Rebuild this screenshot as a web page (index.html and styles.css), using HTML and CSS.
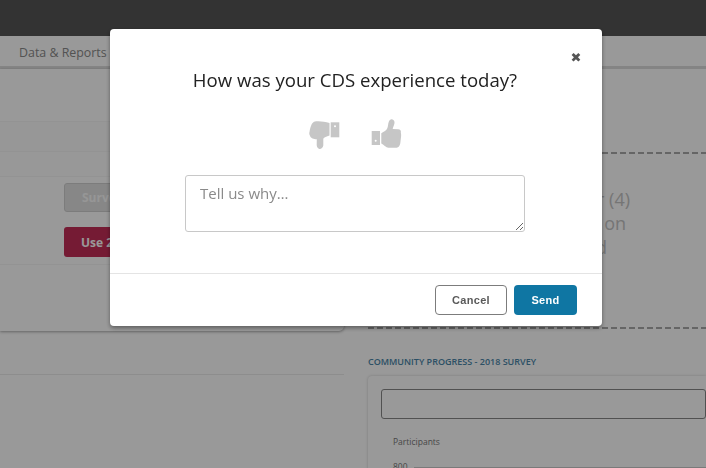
FILE: index.html
```html
<!DOCTYPE html>
<html lang="en">
<head>
<meta charset="utf-8">
<title>CDS feedback</title>
<link rel="stylesheet" href="styles.css">
</head>
<body>
<div class="page">
  <header class="topbar"></header>
  <nav class="nav"><span class="nav-item">Data &amp; Reports</span></nav>
  <main class="content">
    <section class="left">
      <div class="card">
        <div class="row row-a"></div>
        <div class="row row-b"></div>
        <div class="row row-e"></div>
        <div class="row row-c">
          <button class="btn btn-grey">Survey</button>
          <button class="btn btn-red">Use 2018</button>
        </div>
        <div class="row row-d"></div>
      </div>
      <div class="left-gap"></div>
      <div class="card-low"></div>
    </section>
    <section class="right">
      <div class="dashed">
        <p class="note"><span class="l1">Community Partner (4)</span><span class="l2">Reports based on</span><span class="l3">data collected</span></p>
      </div>
      <h2 class="section-title">COMMUNITY PROGRESS - 2018 SURVEY</h2>
      <div class="chart-card">
        <div class="select"></div>
        <div class="axis-title">Participants</div>
        <div class="tick"><span>800</span><i class="tick-line"></i></div>
      </div>
    </section>
  </main>
</div>
<div class="overlay">
  <div class="modal">
    <div class="modal-body">
      <button class="close" aria-label="Close">&#10006;</button>
      <h1 class="title">How was your CDS experience today?</h1>
      <div class="thumbs">
        <svg class="thumb" width="32" height="31" viewBox="0 0 32 31">
          <path d="M21.7 3.3h8.6v15h-8.6z"/>
          <circle class="dot" cx="26" cy="7.3" r="1"/>
          <path d="M5 2.7C9 1.6 15 2.4 20.5 4V16.6C17.500 17.500 15 18.300 14.300 19.800L14.300 26.500C13.800 29 11.800 30.500 10.300 30C8.500 29.500 7.600 27.500 7.700 25.500L7.800 20.300C4.800 20 1.800 19.500 1.200 17.300C0.300 15.500 0 14.500 0.600 12.500C1.300 8.500 2.500 4 5 2.700Z"/>
        </svg>
        <svg class="thumb" width="31" height="30" viewBox="0 0 31 30">
          <path d="M.7 12H9v14H.7z"/>
          <circle class="dot" cx="4.700" cy="21.700" r="1"/>
          <path d="M10.300 24.500V14.300C13 12.500 15.500 11.500 16.300 9.300C17.200 7.200 17 4.500 17.800 2.700C18.500 0.800 20 -.2 21.500 .5C23.500 1.300 23.800 3 23.300 5C22.900 6.800 22 8.500 21.700 10L27.300 10.300C29.300 10.500 30.300 11.800 29.800 13.500C30.500 16 30 18 29.300 24.300C28.800 27 27.500 28.700 25.700 28.700H17.500C15 28.700 12.500 25.300 10.300 24.500Z"/>
        </svg>
      </div>
      <textarea class="why" placeholder="Tell us why…"></textarea>
    </div>
    <div class="modal-foot">
      <button class="action action-cancel">Cancel</button>
      <button class="action action-send">Send</button>
    </div>
  </div>
</div>
</body>
</html>
```
FILE: styles.css
```css
* { box-sizing: border-box; }
html, body { margin: 0; height: 100%; overflow: hidden; }
body { font-family: "Open Sans", sans-serif; background: #fff; color: #8e8e8e; }

.page { width: 706px; height: 468px; overflow: hidden; }
.topbar { height: 36px; background: #555; }
.nav { height: 33px; background: #fff; border-bottom: 3px solid #dcdcdc; padding: 8px 0 0 19px; font-size: 12.400px; line-height: 18px; }
.nav-item { color: #8a8a8a; }

.content { display: grid; grid-template-columns: 344px 338px; column-gap: 24px; }

.left { display: flex; flex-direction: column; }
.card { height: 262px; background: #fff; border-radius: 0 0 5px 0; box-shadow: 0 1px 3px rgba(0,0,0,.35); display: flex; flex-direction: column; }
.row { border-bottom: 1px solid #f6f6f6; }
.row-a { height: 53px; }
.row-b { height: 30px; background: #fcfcfc; }
.row-e { height: 25px; background: #fdfdfd; }
.row-c { height: 88px; display: flex; flex-direction: column; gap: 15px; padding: 6px 0 0 64px; }
.row-d { flex: 1; border: 0; }
.btn { width: 130px; border-radius: 3px; font: 700 12px "Open Sans", sans-serif; text-align: left; padding: 0 0 0 17px; }
.btn-grey { height: 29px; background: #e2e2e2; border: 1px solid #cfcfcf; color: #fafafa; }
.btn-red { height: 30px; background: #c42e58; border: 0; color: #fff; }
.left-gap { height: 44px; border-bottom: 1px solid #ececec; }
.card-low { height: 100px; background: #fff; }

.right { display: flex; flex-direction: column; }
.dashed {
  height: 177px;
  margin-top: 83px;
  padding-top: 2px;
  background:
    repeating-linear-gradient(90deg, #a8a8a8 0 6px, transparent 6px 9px) top left / 100% 2px no-repeat,
    repeating-linear-gradient(90deg, #a8a8a8 0 6px, transparent 6px 9px) bottom left / 100% 2px no-repeat;
}
.note { margin: 33px 0 0; font-size: 18px; line-height: 24px; color: #c4c4c4; width: 262px; text-align: right; }
.note span { display: block; white-space: nowrap; }
.note .l2 { margin-right: 4px; }
.note .l3 { margin-right: 23px; }
.section-title { margin: 27px 0 0; font-size: 9px; line-height: 12px; font-weight: 600; color: #4a85a8; white-space: nowrap; }
.chart-card { margin-top: 8px; height: 120px; background: #fff; border-radius: 4px 0 0 0; box-shadow: 0 0 3px rgba(0,0,0,.2); padding: 13px 0 0 13px; }
.select { height: 30px; border: 1px solid #888; border-radius: 3px; }
.axis-title { margin: 17px 0 0 12px; font-size: 8.500px; line-height: 12px; color: #777; }
.tick { margin: 13px 0 0 12px; display: flex; align-items: center; gap: 6px; font-size: 8.500px; line-height: 12px; color: #777; }
.tick-line { flex: 1; border-top: 1px solid #ccc; }

.overlay { position: fixed; inset: 0; background: rgba(0,0,0,.4); padding: 29px 0 0 110px; }
.modal { width: 492px; height: 297px; background: #fff; border-radius: 4px; box-shadow: 0 2px 4px rgba(0,0,0,.4); display: flex; flex-direction: column; }
.modal-body { position: relative; height: 245px; padding-right: 2px; border-bottom: 1px solid #e4e4e4; display: flex; flex-direction: column; align-items: center; }
.close { position: absolute; top: 21px; right: 19px; width: 14px; height: 15px; border: 0; padding: 0; background: none; font: 700 13px/15px "DejaVu Sans", sans-serif; color: #555; text-align: center; }
.title { margin: 37px 0 0; font-size: 18.600px; line-height: 27px; font-weight: 400; color: #222; white-space: nowrap; }
.thumbs { margin-top: 26px; display: flex; gap: 30px; height: 56px; align-items: flex-start; }
.thumb { display: block; fill: #c6c6c6; }
.thumb .dot { fill: #fff; }
.why { width: 340px; height: 57px; border: 1px solid #c8c8c8; border-radius: 3px; padding: 5px 14px; font: 15px/24px "Open Sans", sans-serif; color: #555; resize: both; outline: 0; }
.why::placeholder { color: #8a8a8a; opacity: 1; }
.modal-foot { display: flex; justify-content: flex-end; gap: 7px; padding: 11px 25px 0 0; }
.action { height: 30px; border-radius: 4px; font: 700 11px "Liberation Sans", sans-serif; letter-spacing: .3px; }
.action-cancel { width: 72px; background: #fff; border: 1px solid #7c7c7c; color: #5a5a5a; }
.action-send { width: 63px; background: #0f76a3; border: 0; color: #fff; }
```
